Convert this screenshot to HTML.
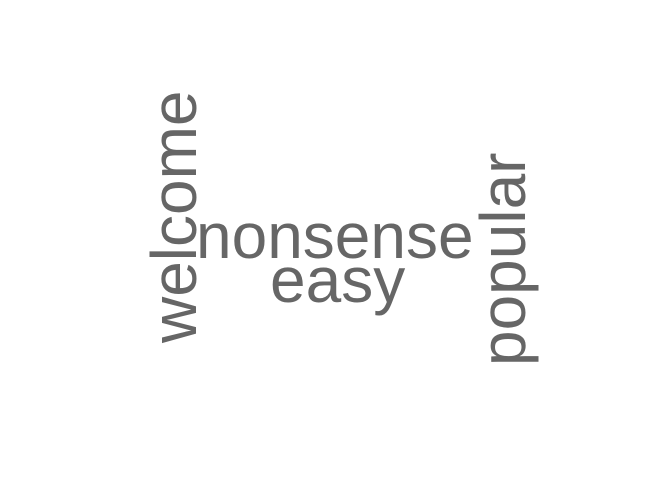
<!DOCTYPE html>
<html><head><meta charset="utf-8"><style>
html,body{margin:0;padding:0;background:#fff;width:672px;height:480px;overflow:hidden}
svg{display:block}
text{font-family:"Liberation Sans",Arial,sans-serif;font-size:64px;fill:#666}
</style></head><body>
<svg width="672" height="480" viewBox="0 0 672 480">
<text x="196" y="258">nonsense</text>
<text x="270" y="302">easy</text>
<text x="0" y="0" transform="translate(196,343) rotate(-90)">welcome</text>
<text x="0" y="0" transform="translate(525,366) rotate(-90)">popular</text>
</svg>
</body></html>
